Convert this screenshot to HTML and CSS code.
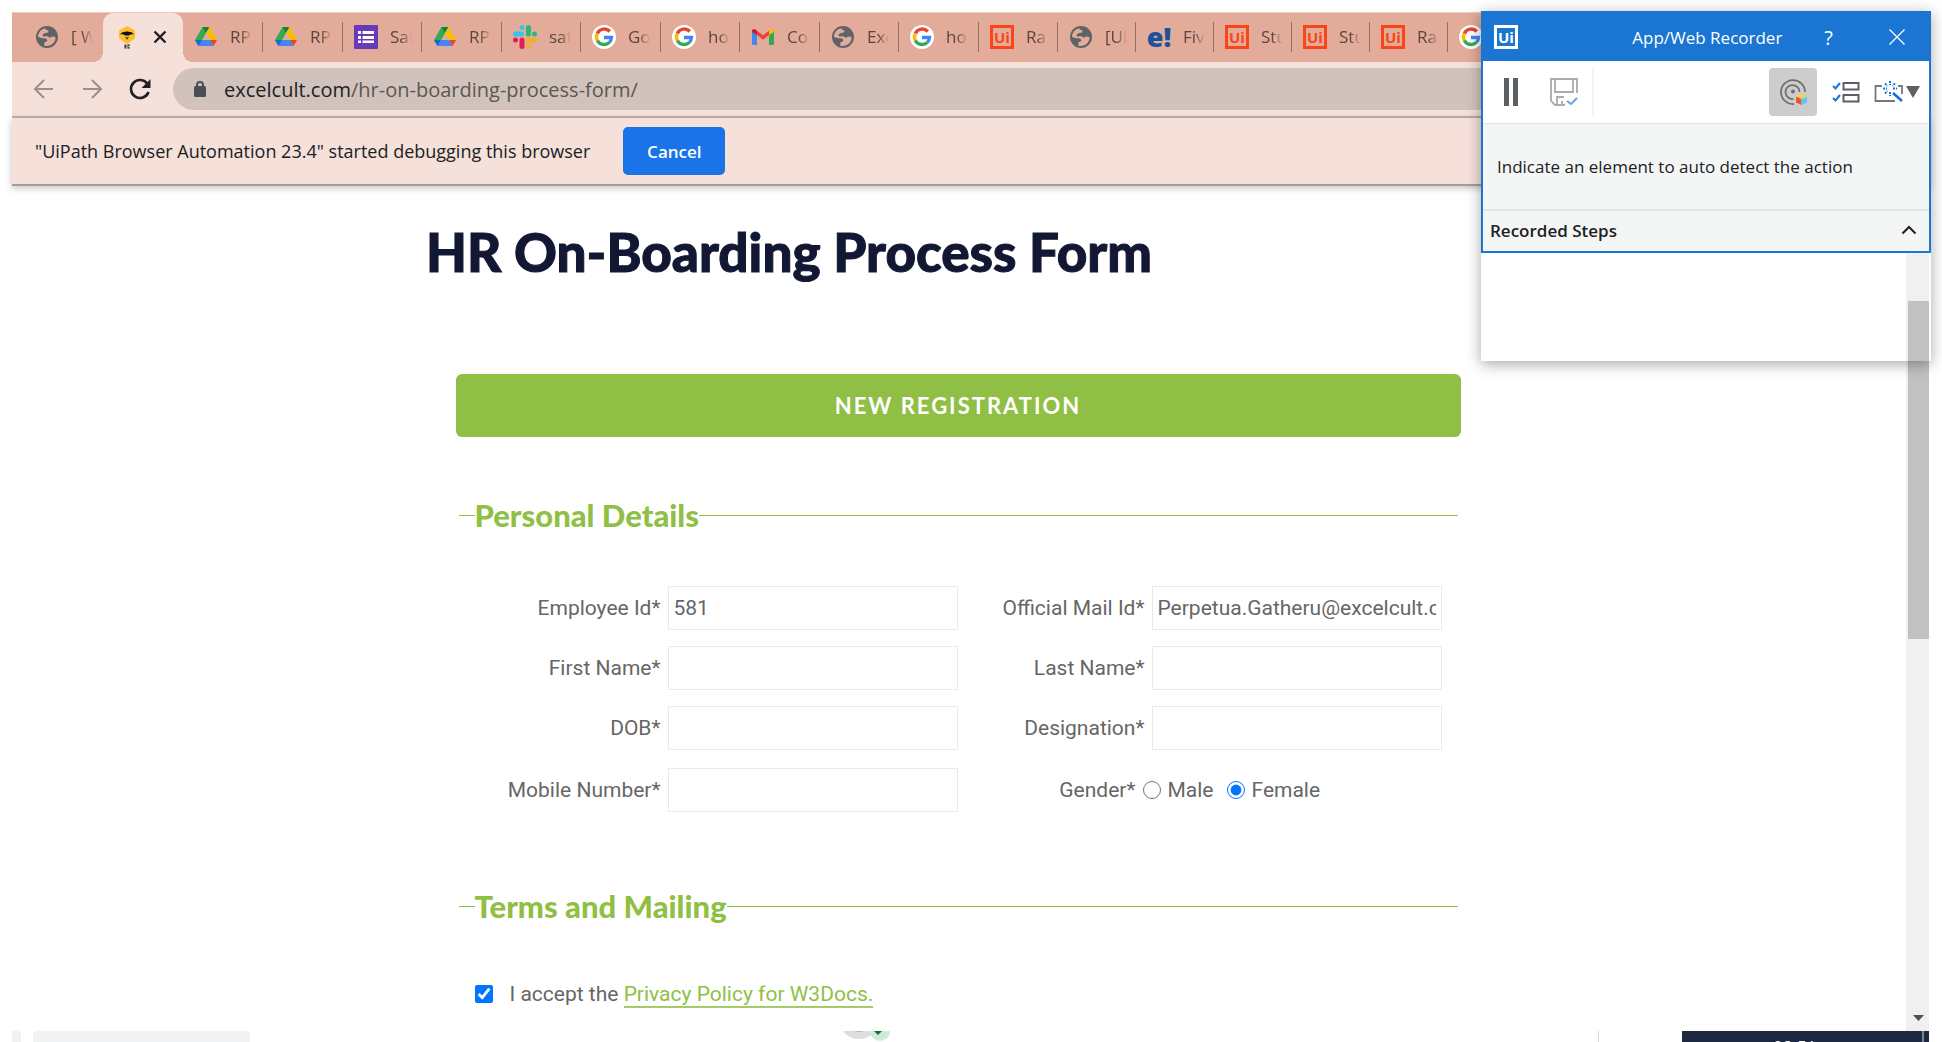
FILE: index.html
```html
<!DOCTYPE html>
<html lang="en">
<head>
<meta charset="utf-8">
<title>HR On-Boarding Process Form</title>
<link rel="stylesheet" href="styles.css">
</head>
<body>
<svg class="sprite" aria-hidden="true">
  <symbol id="globe" viewBox="0 0 24 24"><circle cx="12" cy="12" r="11" fill="#5f6368"/><path d="M10.500 3.200C6 4 3 7.800 3 12l4.500 1.200 4 .3.800 2.500-3 1.500v3.200c5 1 9.500-1.500 11-6l.2-2.700-3-.5-3 1.300-2-1.500-4.500.2-.5-2 2.500-1.500 3-.5.5-2-3-1z" fill="#e2ab9a"/></symbol>
  <symbol id="bee" viewBox="0 0 24 24"><path d="M12 1l8 4.500v8L12 19l-8-5.500v-8z" fill="#fdbf2d"/><path d="M5 9.500c2-2.500 4.500-3 6-2.500l1-1 1 1c1.500-.5 4 0 6 2.500-2-.5-4 0-5 1h-4c-1-1-3-1.500-5-1z" fill="#111"/><path d="M10 12h4l-2 3z" fill="#6b4f16"/><path d="M9.500 19.500h2v1h-1v.5h1v1h-1v.5h1v1h-2zM12.500 19.500h2.500v1h-1.500v2h1.500v1h-2.500z" fill="#222"/></symbol>
  <symbol id="drive" viewBox="0 0 24 24"><path d="M8.500 2h7L8 15l-3.500 6L1 15z" fill="#34a853"/><path d="M8.500 2h7l-3.500 6z" fill="#188038"/><path d="M15.500 2L23 15h-7L12 8z" fill="#fbbc04"/><path d="M8 15h8l3.500 6h-15z" fill="#4285f4"/><path d="M1 15h7l-3.500 6z" fill="#1967d2"/><path d="M16 15h7l-3.500 6z" fill="#ea4335"/></symbol>
  <symbol id="forms" viewBox="0 0 24 24"><rect width="24" height="24" rx="1" fill="#673ab7"/><path d="M4 6h3v3H4zM8.500 6H20v3H8.500zM4 11h3v3H4zM8.500 11H20v3H8.500zM4 15.500h3v2.500H4zM8.500 15.500H20v2.500H8.500z" fill="#fff"/></symbol>
  <symbol id="slack" viewBox="0 0 24 24"><g stroke-width="5" stroke-linecap="round"><path d="M2.500 9h6M9 2.500h.01" stroke="#36c5f0"/><path d="M15.500 2.500V9M21.500 9h.01" stroke="#2eb67d"/><path d="M15.500 15h6M15.500 21.500h.01" stroke="#ecb22e"/><path d="M9 15v6.500M2.500 15h.01" stroke="#e01e5a"/></g></symbol>
  <symbol id="google" viewBox="0 0 24 24"><circle cx="12" cy="12" r="12" fill="#fff"/><g fill="none" stroke-width="3.400"><path d="M17.800 6.500A7.600 7.600 0 0 0 5.300 8.500" stroke="#ea4335"/><path d="M5.300 8.500a7.600 7.600 0 0 0 0 7" stroke="#fbbc05"/><path d="M5.300 15.500a7.600 7.600 0 0 0 12 1.900" stroke="#34a853"/><path d="M17.300 17.400a7.600 7.600 0 0 0 2.200-4.900H12" stroke="#4285f4"/></g></symbol>
  <symbol id="gmail" viewBox="0 0 24 24"><path d="M1 6v13q0 1 1 1h4V10z" fill="#4285f4"/><path d="M23 6v13q0 1-1 1h-4V10z" fill="#34a853"/><path d="M18 10l5-3V5.500Q22 3 19.500 4.500L18 5.700z" fill="#fbbc04"/><path d="M1 7l5 3V5.700L4.500 4.500Q2 3 1 5.500z" fill="#c5221f"/><path d="M6 5.700l6 4.500 6-4.500V10l-6 4.800L6 10z" fill="#ea4335"/></symbol>
  <symbol id="uipath" viewBox="0 0 24 24"><rect x="1.500" y="1.500" width="21" height="21" fill="none" stroke="currentColor" stroke-width="3"/><text x="12" y="18" text-anchor="middle" class="logo-ui">Ui</text></symbol>
  <symbol id="exclaim" viewBox="0 0 24 24"><text x="12" y="22" text-anchor="middle" class="logo-e">e!</text></symbol>
</svg>

<div class="browser">
  <nav class="tabs" aria-label="Open tabs">
    <div class="tab tab-first"><svg class="fav"><use href="#globe"/></svg><span class="name">[ Wa</span></div>
    <div class="tab tab-active"><svg class="fav"><use href="#bee"/></svg><button class="tab-close" aria-label="Close tab"><svg viewBox="0 0 14 14"><path d="M1.500 1.500l11 11M12.500 1.500l-11 11" stroke="#1f2023" stroke-width="2.400"/></svg></button></div>
    <div class="tab"><svg class="fav"><use href="#drive"/></svg><span class="name">RPA</span></div>
    <div class="tab"><svg class="fav"><use href="#drive"/></svg><span class="name">RPA</span></div>
    <div class="tab"><svg class="fav"><use href="#forms"/></svg><span class="name">Saf</span></div>
    <div class="tab"><svg class="fav"><use href="#drive"/></svg><span class="name">RPA</span></div>
    <div class="tab"><svg class="fav"><use href="#slack"/></svg><span class="name">saf</span></div>
    <div class="tab"><svg class="fav"><use href="#google"/></svg><span class="name">Go</span></div>
    <div class="tab"><svg class="fav"><use href="#google"/></svg><span class="name">ho</span></div>
    <div class="tab"><svg class="fav"><use href="#gmail"/></svg><span class="name">Co</span></div>
    <div class="tab"><svg class="fav"><use href="#globe"/></svg><span class="name">Exc</span></div>
    <div class="tab"><svg class="fav"><use href="#google"/></svg><span class="name">ho</span></div>
    <div class="tab"><svg class="fav orange"><use href="#uipath"/></svg><span class="name">Ra</span></div>
    <div class="tab"><svg class="fav"><use href="#globe"/></svg><span class="name">[Ui</span></div>
    <div class="tab"><svg class="fav"><use href="#exclaim"/></svg><span class="name">Fiv</span></div>
    <div class="tab"><svg class="fav orange"><use href="#uipath"/></svg><span class="name">Stu</span></div>
    <div class="tab"><svg class="fav orange"><use href="#uipath"/></svg><span class="name">Stu</span></div>
    <div class="tab"><svg class="fav orange"><use href="#uipath"/></svg><span class="name">Ra</span></div>
    <div class="tab"><svg class="fav"><use href="#google"/></svg></div>
  </nav>

  <div class="toolbar">
    <button class="nav-btn" aria-label="Back"><svg viewBox="0 0 24 24"><path d="M21 12H3M12 3l-9 9 9 9" fill="none" stroke="#9c908d" stroke-width="2"/></svg></button>
    <button class="nav-btn" aria-label="Forward"><svg viewBox="0 0 24 24"><path d="M3 12h18M12 3l9 9-9 9" fill="none" stroke="#9c908d" stroke-width="2"/></svg></button>
    <button class="nav-btn" aria-label="Reload"><svg viewBox="0 0 24 24"><path d="M19.500 7A9 9 0 1 0 20.500 15" fill="none" stroke="#202124" stroke-width="2.600"/><path d="M22.500 2v9h-9z" fill="#202124"/></svg></button>
    <div class="address">
      <svg viewBox="0 0 14 18"><rect x="1" y="6" width="12" height="11" rx="1.500" fill="#4b4f54"/><path d="M4 7V5a3 3 0 0 1 6 0v2" fill="none" stroke="#4b4f54" stroke-width="2"/></svg>
      <span>excelcult.com<span class="path">/hr-on-boarding-process-form/</span></span>
    </div>
  </div>

  <div class="infobar">
    <span>"UiPath Browser Automation 23.4" started debugging this browser</span>
    <button class="cancel">Cancel</button>
  </div>

  <div class="viewport">
    <main class="page">
      <h1>HR On-Boarding Process Form</h1>
      <form>
        <button type="button" class="register">NEW REGISTRATION</button>
        <fieldset>
          <legend>Personal Details</legend>
          <div class="fields">
            <label for="emp">Employee Id*</label><input type="text" id="emp" value="581">
            <label for="mail">Official Mail Id*</label><input type="text" id="mail" value="Perpetua.Gatheru@excelcult.com">
            <label for="first">First Name*</label><input type="text" id="first">
            <label for="last">Last Name*</label><input type="text" id="last">
            <label for="dob">DOB*</label><input type="text" id="dob">
            <label for="desig">Designation*</label><input type="text" id="desig">
            <label for="mobile">Mobile Number*</label><input type="text" id="mobile">
            <div class="gender" role="radiogroup" aria-labelledby="gender">
              <span id="gender" class="gender-label">Gender*</span>
              <input type="radio" name="g" id="male"><label for="male">Male</label>
              <input type="radio" name="g" id="female" checked><label for="female">Female</label>
            </div>
          </div>
        </fieldset>
        <fieldset class="terms">
          <legend>Terms and Mailing</legend>
          <div class="accept">
            <input type="checkbox" id="accept" checked>
            <label for="accept">I accept the <a href="#privacy">Privacy Policy for W3Docs.</a></label>
          </div>
        </fieldset>
      </form>
    </main>
    <div class="scrollbar" aria-hidden="true">
      <div class="thumb"></div>
      <svg viewBox="0 0 11 6"><path d="M0 0h11L5.500 6z" fill="#505050"/></svg>
    </div>
  </div>
</div>

<footer class="desktop">
  <div class="chip chip-small"></div>
  <div class="chip"></div>
  <svg class="avatar" viewBox="0 0 48 11"><circle cx="16" cy="-12" r="20" fill="#dedede"/><path d="M11 0h10q-5 2-10 0z" fill="#b5b5b5"/><circle cx="37" cy="0" r="10" fill="#cdead6"/><path d="M31 0h8l-4 4z" fill="#14703a"/></svg>
  <div class="divider"></div>
  <div class="taskbar"><time>08:51</time></div>
</footer>

<section class="recorder" aria-label="App/Web Recorder">
  <div class="recorder-window">
    <header class="rec-title">
      <svg class="fav"><use href="#uipath"/></svg>
      <h2>App/Web Recorder</h2>
      <button aria-label="Help">?</button>
      <button aria-label="Close"><svg class="rec-x" viewBox="0 0 16 16"><path d="M.5.5l15 15M15.500.5l-15 15" stroke="#fff" stroke-width="1.300"/></svg></button>
    </header>
    <div class="rec-tools">
      <button class="tool-pause" aria-label="Pause"><svg viewBox="0 0 28 28"><path d="M7 0h5v28H7zM16 0h5v28h-5z" fill="#5d6063"/></svg></button>
      <button class="tool-save" aria-label="Save"><svg viewBox="0 0 28 28"><g fill="none" stroke="#a9abad" stroke-width="1.800"><path d="M15 27H5l-4-4V1h26v14"/><path d="M5 1v13h18V1M7 27v-8h7M12 27v-4"/></g><path d="M17 23l4 3 6-6" fill="none" stroke="#67a3e6" stroke-width="2"/></svg></button>
      <span class="tool-split"></span>
      <button class="tool-detect" aria-label="Auto detect"><svg viewBox="0 0 28 28"><g fill="none" stroke="#6d6f71" stroke-width="1.800"><path d="M26 14A12 12 0 1 0 15 26"/><path d="M20.500 14a7 7 0 1 0-6 7"/></g><circle cx="14" cy="13.500" r="2" fill="#6d6f71"/><path d="M17 18l5.500-2.500L28 18l-5.500 2.500z" fill="#f6cf55"/><path d="M17 18.500l5.500 2.500v6L17 24.500z" fill="#f0522a"/><path d="M28 18.500L22.500 21v6l5.500-2.500z" fill="#5bc8f5"/></svg></button>
      <button class="tool-list" aria-label="Steps"><svg viewBox="0 0 28 28"><path d="M11.500 5h15v6.500h-15zM11.500 17h15v6.500h-15z" fill="none" stroke="#5d6063" stroke-width="2"/><path d="M1 8l2.500 2.500L8 5M1 20l2.500 2.500L8 17" fill="none" stroke="#1a76d2" stroke-width="2"/></svg></button>
      <button class="tool-wand" aria-label="Options"><svg viewBox="0 0 46 28"><path d="M8 8H1.500v15H21M24 8h4v8" fill="none" stroke="#75797d" stroke-width="1.800"/><path d="M19 15l9 8" stroke="#0f6fde" stroke-width="2.400"/><path d="M16 3v4M16 14v4M9 10.500h4M19 10.500h4M11 5.500l2.500 2.500M21 5.500L18.500 8M11 15.500l2.500-2.500" stroke="#0f6fde" stroke-width="2" stroke-dasharray="2 1"/><path d="M32 8h14l-7 12z" fill="#606060"/></svg></button>
    </div>
    <p class="rec-hint">Indicate an element to auto detect the action</p>
    <div class="rec-steps"><h3>Recorded Steps</h3><button aria-label="Collapse"><svg viewBox="0 0 16 10"><path d="M1.500 8.500l6.500-6.500 6.500 6.500" fill="none" stroke="#1f1f1f" stroke-width="2"/></svg></button></div>
  </div>
</section>
</body>
</html>
```
FILE: styles.css
```css
* { box-sizing: border-box; }

body {
  margin: 0;
  height: 100vh;
  padding: 12px 13px 0 12px;
  display: flex;
  flex-direction: column;
  overflow: hidden;
  position: relative;
  background: #fff;
  font-family: "Open Sans", "Noto Sans", sans-serif;
  color: #202124;
}

button {
  border: 0;
  padding: 0;
  background: none;
  font: inherit;
  color: inherit;
}

button svg { display: block; }

.sprite { display: none; }

.browser {
  flex: 1;
  min-height: 0;
  display: flex;
  flex-direction: column;
}

/* Tab strip */
.tabs {
  display: flex;
  height: 50px;
  overflow: hidden;
  background: #e2ab9a;
  border-top: 1px solid #eecabf;
}

.tab {
  flex: none;
  display: flex;
  align-items: center;
  gap: 12px;
  width: 80px;
  padding: 0 0 2px 11px;
  background: linear-gradient(#8f6f66, #8f6f66) right 9px / 1px 30px no-repeat;
}

.tab:nth-child(odd) { width: 79px; }
.tab:nth-child(3) { width: 80px; }
.tab:nth-child(n+14) { width: 78px; }
.tab:nth-child(19) { background: none; }

.tab.tab-first { width: 91px; padding-left: 23px; background: none; }

.tab.tab-active {
  position: relative;
  width: 80px;
  padding-left: 12px;
  gap: 14px;
  background: #f5e0da;
  border-radius: 10px 10px 0 0;
}

/* Flared feet of the active tab */
.tab-active::before, .tab-active::after {
  content: "";
  position: absolute;
  bottom: 0;
  width: 10px;
  height: 10px;
}
.tab-active::before { right: 100%; background: radial-gradient(circle at 0 0, transparent 10px, #f5e0da 10px); }
.tab-active::after { left: 100%; background: radial-gradient(circle at 100% 0, transparent 10px, #f5e0da 10px); }

.fav { flex: none; width: 24px; height: 24px; color: #fff; }
.fav.orange { color: #fa4616; }

.logo-ui { font: bold 15px "Open Sans", sans-serif; fill: currentColor; }
.logo-e { font: 800 27px "Open Sans", sans-serif; fill: #1c4f9c; }

.name {
  width: 22px;
  overflow: hidden;
  white-space: nowrap;
  font-size: 17px;
  color: #5a4640;
  mask-image: linear-gradient(90deg, #000 50%, transparent);
}

.tab-close svg { width: 14px; height: 14px; }

/* Address row */
.toolbar {
  display: flex;
  align-items: center;
  gap: 24px;
  height: 56px;
  padding-left: 20px;
  background: #f5e0da;
  border-bottom: 2px solid #c6b0aa;
}

.nav-btn svg { width: 24px; height: 24px; }

.address {
  flex: 1;
  display: flex;
  align-items: center;
  gap: 17px;
  height: 42px;
  margin-left: -3px;
  padding-left: 20px;
  border-radius: 21px 0 0 21px;
  background: #d1c3bb;
  font-size: 20px;
}

.address svg { width: 14px; height: 18px; }
.path { color: #5c5654; }

.infobar {
  position: relative;
  display: flex;
  align-items: center;
  gap: 33px;
  height: 68px;
  padding-left: 23px;
  background: #f5e0da;
  border-bottom: 2px solid #a59b98;
  box-shadow: 0 2px 7px rgba(0, 0, 0, .25);
  font-size: 18px;
}

.cancel {
  width: 102px;
  height: 48px;
  border-radius: 5px;
  background: #1a73e8;
  color: #fff;
  font-size: 17px;
  font-weight: 600;
}

/* Web page */
.viewport {
  flex: 1;
  min-height: 0;
  display: flex;
}

.page {
  flex: 1;
  overflow: hidden;
  padding: 34px 2px 0 0;
  font-family: Roboto, sans-serif;
  font-size: 21px;
  color: #666;
}

h1 {
  max-width: 1064px;
  margin: 0 auto 90px;
  font: 900 53px/64px Lato, sans-serif;
  color: #121833;
  -webkit-text-stroke: 1px #121833;
}

form {
  max-width: 1005px;
  margin: 0 auto;
}

.register {
  display: block;
  width: 100%;
  height: 63px;
  border-radius: 6px;
  background: #8fbf44;
  color: #fff;
  font: 700 22px Lato, sans-serif;
  letter-spacing: 2px;
}

fieldset {
  margin: 60px 3px 0;
  padding: 53px 16px 0 0;
  border: 0;
  border-top: 1px solid #8fbf44;
}

fieldset.terms { margin-top: 74px; }

legend {
  margin-left: 16px;
  padding: 0;
  font: 900 31px/36px Lato, sans-serif;
  color: #8fbf44;
}

.fields {
  display: grid;
  grid-template-columns: 202px 1fr 180px 1fr;
  grid-template-rows: 44px 44px 44px 48px;
  gap: 16px 7px;
  align-items: center;
}

.fields > label, .gender-label { text-align: right; }

input[type="text"] {
  width: 100%;
  min-width: 0;
  height: 44px;
  padding: 0 5px;
  border: 1px solid #e8eaee;
  background: #fff;
  font: inherit;
  color: inherit;
}

input[type="radio"], input[type="checkbox"] {
  width: 18px;
  height: 18px;
  margin: 0;
  accent-color: #0075ff;
}

.gender {
  grid-column: 3 / 5;
  display: flex;
  align-items: center;
  gap: 7px;
}

.gender-label { width: 171px; }
.gender label + input { margin-left: 6px; }

.accept {
  display: flex;
  align-items: center;
  gap: 17px;
  padding: 5px 0 0 16px;
}

.accept a {
  color: #8fbf44;
  text-decoration: none;
  border-bottom: 2px solid #a5cc6a;
}

/* Page scrollbar */
.scrollbar {
  flex: none;
  width: 23px;
  padding: 115px 0 10px 2px;
  display: flex;
  flex-direction: column;
  justify-content: space-between;
  background: #f0f0f0;
}

.thumb { height: 47%; background: #c1c1c1; }
.scrollbar svg { width: 11px; height: 6px; margin-left: 5px; }

/* What shows of the desktop under the browser */
.desktop {
  display: flex;
  height: 11px;
  overflow: hidden;
}

.chip {
  width: 217px;
  background: #f1f2f4;
  border-radius: 4px 4px 0 0;
}

.chip-small { width: 9px; margin-right: 12px; border-radius: 0 4px 0 0; }
.avatar { width: 48px; height: 11px; margin-left: 593px; }
.divider { width: 1px; margin-left: auto; background: #d8d8d8; }

.taskbar {
  width: 247px;
  margin-left: 83px;
  padding: 4px 0 0 91px;
  background: linear-gradient(90deg, #1c2940 240px, #7c8494 240px, #7c8494 242px, #1c2940 242px);
  color: #fff;
  font-size: 17px;
}

/* Recorder window floating over the browser */
.recorder {
  position: absolute;
  top: 11px;
  right: 11px;
  width: 450px;
  height: 350px;
  box-shadow: 0 3px 14px rgba(0, 0, 0, .35);
}

.recorder-window {
  border: 2px solid #1a76d2;
  background: #f4f6f6;
}

.rec-title {
  display: flex;
  align-items: center;
  height: 48px;
  padding: 0 24px 0 11px;
  background: #1a76d2;
  color: #fff;
}

.rec-title h2 {
  flex: 1;
  margin: 0 42px 0 0;
  text-align: right;
  font-size: 17px;
  font-weight: 400;
}

.rec-title button { font-size: 20px; }
.rec-title button + button { margin-left: 56px; }
.rec-x { width: 16px; height: 16px; }

.rec-tools {
  display: flex;
  align-items: center;
  height: 63px;
  padding-right: 9px;
  background: #fff;
  border-bottom: 1px solid #e2e4e4;
}

.rec-tools svg { width: 28px; height: 28px; }
.tool-pause { margin-left: 14px; }
.tool-save { margin-left: 25px; }
.tool-split { width: 2px; height: 48px; margin: 0 auto 0 14px; background: #f2f3f3; }

.tool-detect {
  display: grid;
  place-items: center;
  width: 48px;
  height: 48px;
  border-radius: 4px;
  background: #cdcdcd;
}

.tool-list { margin: 0 14px 0 15px; }
.rec-tools .tool-wand svg { width: 46px; }

.rec-hint {
  margin: 0;
  padding: 0 14px;
  line-height: 85px;
  font-size: 17px;
  border-bottom: 2px solid #e2e5e5;
}

.rec-steps {
  display: flex;
  align-items: center;
  justify-content: space-between;
  height: 40px;
  padding: 0 12px 2px 7px;
}

.rec-steps h3 { margin: 0; font-size: 17px; font-weight: 600; }
.rec-steps svg { width: 16px; height: 10px; }
```
